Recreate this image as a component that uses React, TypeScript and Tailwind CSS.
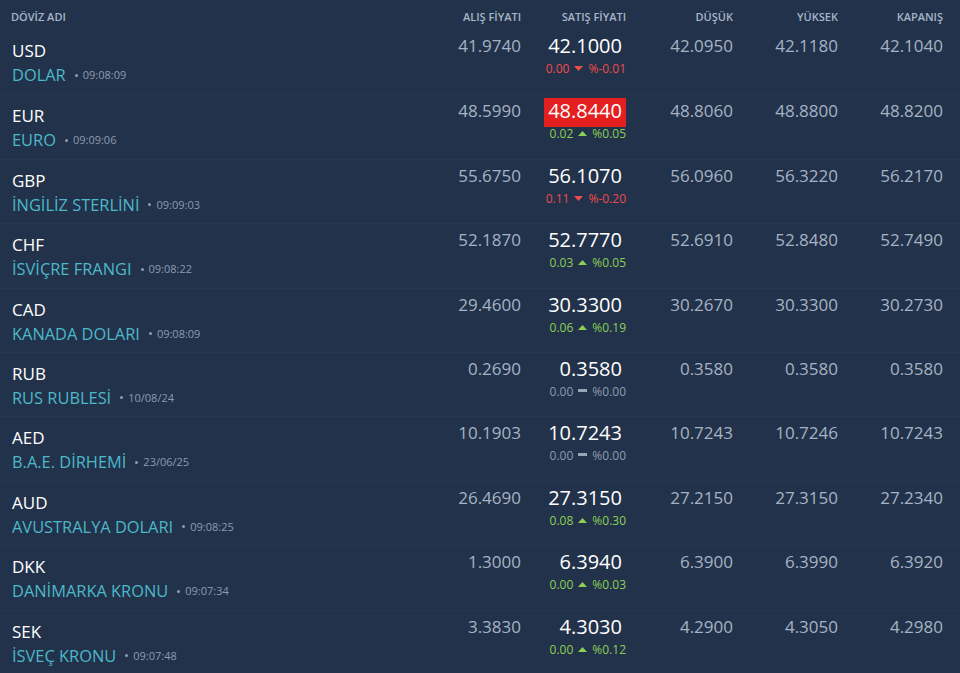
import React from "react";

type Dir = "up" | "down" | "flat";
type Row = {
  code: string;
  name: string;
  time: string;
  buy: string;
  sell: string;
  chg: string;
  pct: string;
  dir: Dir;
  low: string;
  high: string;
  close: string;
  hl?: boolean;
};

const rows: Row[] = [
  { code: "USD", name: "DOLAR", time: "09:08:09", buy: "41.9740", sell: "42.1000", chg: "0.00", pct: "%-0.01", dir: "down", low: "42.0950", high: "42.1180", close: "42.1040" },
  { code: "EUR", name: "EURO", time: "09:09:06", buy: "48.5990", sell: "48.8440", chg: "0.02", pct: "%0.05", dir: "up", low: "48.8060", high: "48.8800", close: "48.8200", hl: true },
  { code: "GBP", name: "İNGİLİZ STERLİNİ", time: "09:09:03", buy: "55.6750", sell: "56.1070", chg: "0.11", pct: "%-0.20", dir: "down", low: "56.0960", high: "56.3220", close: "56.2170" },
  { code: "CHF", name: "İSVİÇRE FRANGI", time: "09:08:22", buy: "52.1870", sell: "52.7770", chg: "0.03", pct: "%0.05", dir: "up", low: "52.6910", high: "52.8480", close: "52.7490" },
  { code: "CAD", name: "KANADA DOLARI", time: "09:08:09", buy: "29.4600", sell: "30.3300", chg: "0.06", pct: "%0.19", dir: "up", low: "30.2670", high: "30.3300", close: "30.2730" },
  { code: "RUB", name: "RUS RUBLESİ", time: "10/08/24", buy: "0.2690", sell: "0.3580", chg: "0.00", pct: "%0.00", dir: "flat", low: "0.3580", high: "0.3580", close: "0.3580" },
  { code: "AED", name: "B.A.E. DİRHEMİ", time: "23/06/25", buy: "10.1903", sell: "10.7243", chg: "0.00", pct: "%0.00", dir: "flat", low: "10.7243", high: "10.7246", close: "10.7243" },
  { code: "AUD", name: "AVUSTRALYA DOLARI", time: "09:08:25", buy: "26.4690", sell: "27.3150", chg: "0.08", pct: "%0.30", dir: "up", low: "27.2150", high: "27.3150", close: "27.2340" },
  { code: "DKK", name: "DANİMARKA KRONU", time: "09:07:34", buy: "1.3000", sell: "6.3940", chg: "0.00", pct: "%0.03", dir: "up", low: "6.3900", high: "6.3990", close: "6.3920" },
  { code: "SEK", name: "İSVEÇ KRONU", time: "09:07:48", buy: "3.3830", sell: "4.3030", chg: "0.00", pct: "%0.12", dir: "up", low: "4.2900", high: "4.3050", close: "4.2980" },
];

function Arrow({ dir }: { dir: Dir }) {
  if (dir === "flat")
    return <span className="inline-block w-[9px] h-[3px] bg-[#9aa6b6] mx-[5px] relative top-[-1px]" />;
  return (
    <svg width="9" height="5" viewBox="0 0 9 5" className="mx-[5px]">
      {dir === "up" ? (
        <polygon points="0,5 9,5 4.5,0" fill="#8ccf55" />
      ) : (
        <polygon points="0,0 9,0 4.5,5" fill="#ef4b4b" />
      )}
    </svg>
  );
}

const changeColor: Record<Dir, string> = {
  up: "text-[#8ccf55]",
  down: "text-[#ef4b4b]",
  flat: "text-[#8f9cae]",
};

export default function App() {
  return (
    <div
      className="w-[960px] h-[673px] overflow-hidden bg-[#22324a]"
      style={{ fontFamily: '"Open Sans", "Noto Sans", sans-serif' }}
    >
      <div className="grid grid-cols-[1fr_105px_105px_107px_105px_105px] pr-[17px] pl-[11px] h-[30px] items-center text-[11px] font-semibold text-[#a7b5c8] pt-[5px]">
        <div>DÖVİZ ADI</div>
        <div className="text-right">ALIŞ FİYATI</div>
        <div className="text-right">SATIŞ FİYATI</div>
        <div className="text-right">DÜŞÜK</div>
        <div className="text-right">YÜKSEK</div>
        <div className="text-right">KAPANIŞ</div>
      </div>
      {rows.map((r, i) => (
        <div
          key={r.code}
          className={`grid grid-cols-[1fr_105px_105px_107px_105px_105px] pr-[17px] pl-[12px] h-[64.4px] items-start ${
            i === 0 ? "" : "border-t border-[#27374f]"
          }`}
        >
          <div className="pt-[9px]">
            <div className="text-[17px] leading-[23px] text-white">{r.code}</div>
            <div className="flex items-center leading-[22px] mt-[2px]">
              <span className="text-[16.4px] text-[#4cb8c9]">{r.name}</span>
              <span className="ml-[9px] w-[3px] h-[3px] rounded-full bg-[#8d9bb0]" />
              <span className="ml-[5px] text-[11px] text-[#8d9bb0]">{r.time}</span>
            </div>
          </div>
          <div className="pt-[4px] text-right text-[17px] leading-[24px] text-[#a6b3c4]">{r.buy}</div>
          <div className="pt-[3px] flex flex-col items-end">
            <span
              className={`inline-block px-[4px] text-[20px] leading-[26px] pb-[3px] text-white ${
                r.hl ? "bg-[#e3201f]" : ""
              }`}
            >
              {r.sell}
            </span>
            <div className={`flex items-center text-[12px] leading-[13px] ${changeColor[r.dir]}`}>
              <span>{r.chg}</span>
              <Arrow dir={r.dir} />
              <span>{r.pct}</span>
            </div>
          </div>
          <div className="pt-[4px] text-right text-[17px] leading-[24px] text-[#a6b3c4]">{r.low}</div>
          <div className="pt-[4px] text-right text-[17px] leading-[24px] text-[#a6b3c4]">{r.high}</div>
          <div className="pt-[4px] text-right text-[17px] leading-[24px] text-[#a6b3c4]">{r.close}</div>
        </div>
      ))}
    </div>
  );
}
